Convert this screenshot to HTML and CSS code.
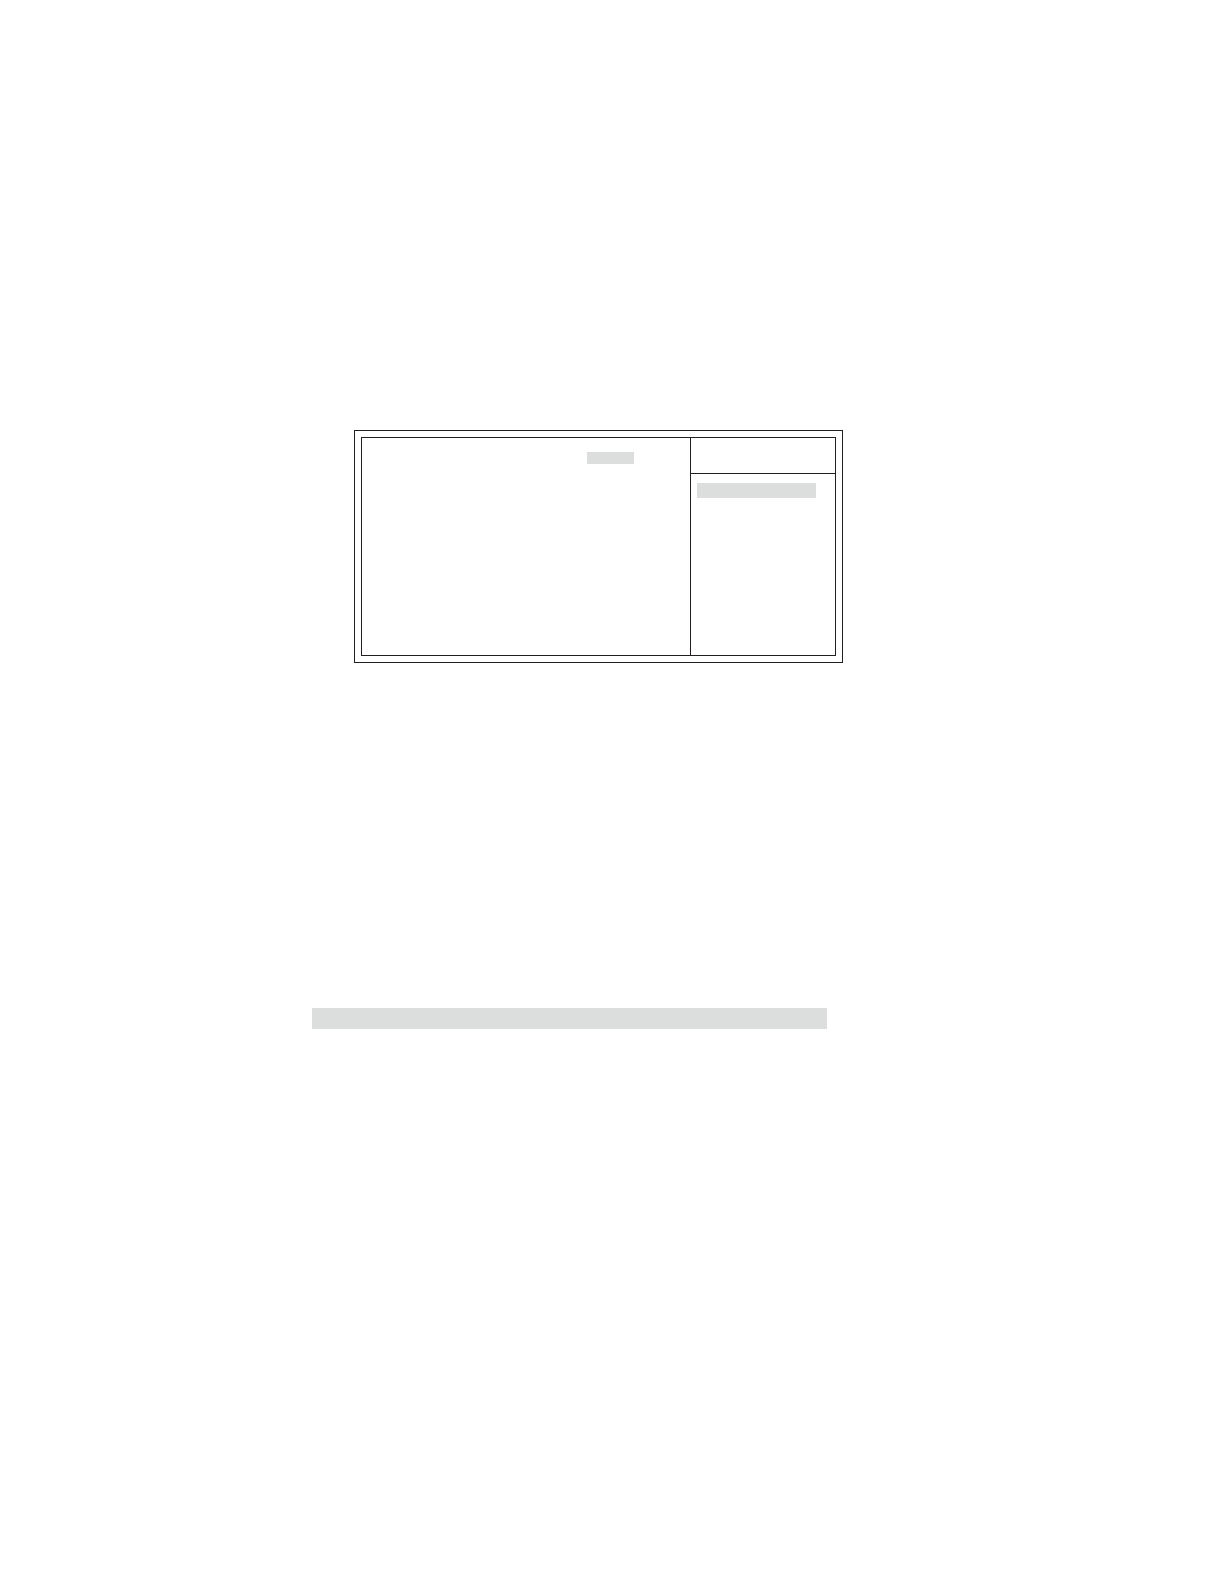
FILE: index.html
```html
<!DOCTYPE html>
<html lang="en">
<head>
  <meta charset="utf-8">
  <meta name="viewport" content="width=device-width, initial-scale=1">
  <title>Setup menu</title>
  <link rel="stylesheet" href="styles.css">
</head>
<body>
  <main class="page">
    <section class="frame">
      <div class="screen">
        <div class="options">
          <div class="highlight option-value"></div>
        </div>
        <aside class="help">
          <div class="help-title"></div>
          <div class="help-body">
            <div class="highlight help-item"></div>
          </div>
        </aside>
      </div>
    </section>
    <div class="highlight band"></div>
  </main>
</body>
</html>
```
FILE: styles.css
```css
* {
  box-sizing: border-box;
}

body {
  margin: 0;
  background: #fff;
  font-family: "Liberation Sans", sans-serif;
}

.page {
  display: flex;
  flex-direction: column;
  gap: 345px;
  min-height: 100vh;
  padding: 430px 381px 0 312px;
}

/* Double-ruled frame around the setup screen */
.frame {
  margin-left: 42px;
  padding: 6px;
  border: 1px solid #231f20;
}

.screen {
  display: grid;
  grid-template-columns: 1fr 145px;
  border: 1px solid #231f20;
}

.options {
  padding: 14px 56px 14px 225px;
}

.help {
  border-left: 1px solid #231f20;
}

.help-title {
  height: 36px;
  border-bottom: 1px solid #231f20;
}

.help-body {
  min-height: 181px;
  padding: 9px 19px 9px 6px;
}

.highlight {
  background: #dcdddd;
}

.option-value {
  height: 12px;
}

.help-item {
  height: 15px;
}

.band {
  height: 21px;
  margin-right: 16px;
}
```
